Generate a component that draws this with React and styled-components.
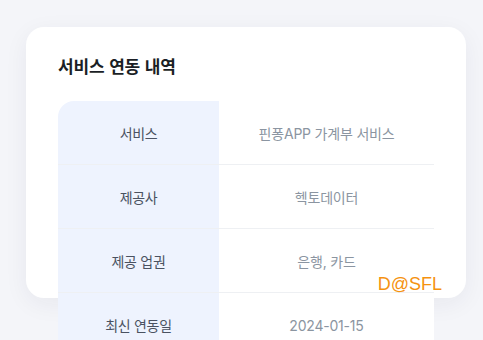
import React from "react";
import styled, { createGlobalStyle } from "styled-components";

const Global = createGlobalStyle`
  html, body {
    margin: 0;
    padding: 0;
    background: #f4f5f9;
    font-family: Inter, "Noto Sans CJK KR", "Noto Sans", sans-serif;
    overflow: hidden;
  }
`;

const Page = styled.div`
  padding: 27px 0 0 26px;
  width: 483px;
  height: 340px;
  box-sizing: border-box;
`;

const Card = styled.section`
  position: relative;
  width: 440px;
  height: 271px;
  box-sizing: border-box;
  padding: 28px 32px 0;
  background: #ffffff;
  border-radius: 18px;
  box-shadow: 0 6px 24px rgba(30, 40, 70, 0.06);
`;

const Title = styled.h2`
  margin: 0;
  font-size: 17px;
  line-height: 24px;
  font-weight: 700;
  color: #1b1f26;
  letter-spacing: -0.2px;
  word-spacing: 1px;
`;

const Table = styled.div`
  margin-top: 22px;
  border-radius: 16px 16px 0 0;
  overflow: hidden;
  background: #ffffff;
`;

const Row = styled.div`
  display: grid;
  grid-template-columns: 161px 1fr;
  height: 64px;
  box-sizing: border-box;
  border-bottom: ${(p) => (p.$last ? "none" : "1px solid #eef0f3")};
`;

const Label = styled.div`
  display: flex;
  align-items: center;
  justify-content: center;
  background: #eef3fe;
  font-size: 14px;
  font-weight: 400;
  color: #4a5261;
  letter-spacing: -0.3px;
`;

const Value = styled.div`
  display: flex;
  align-items: center;
  justify-content: center;
  font-size: 14px;
  color: #8b95a1;
  letter-spacing: -0.2px;
`;

const Watermark = styled.span`
  position: absolute;
  right: 24px;
  bottom: 3px;
  font-family: "Liberation Sans", Arial, sans-serif;
  font-size: 18px;
  line-height: 22px;
  color: #f5920f;
`;

const rows = [
  ["서비스", "핀퐁APP 가계부 서비스"],
  ["제공사", "헥토데이터"],
  ["제공 업권", "은행, 카드"],
  ["최신 연동일", "2024-01-15"],
];

export default function App() {
  return (
    <>
      <Global />
      <Page>
        <Card>
          <Title>서비스 연동 내역</Title>
          <Table>
            {rows.map(([k, v], i) => (
              <Row key={k} $last={i === rows.length - 1}>
                <Label>{k}</Label>
                <Value>{v}</Value>
              </Row>
            ))}
          </Table>
          <Watermark>D@SFL</Watermark>
        </Card>
      </Page>
    </>
  );
}
